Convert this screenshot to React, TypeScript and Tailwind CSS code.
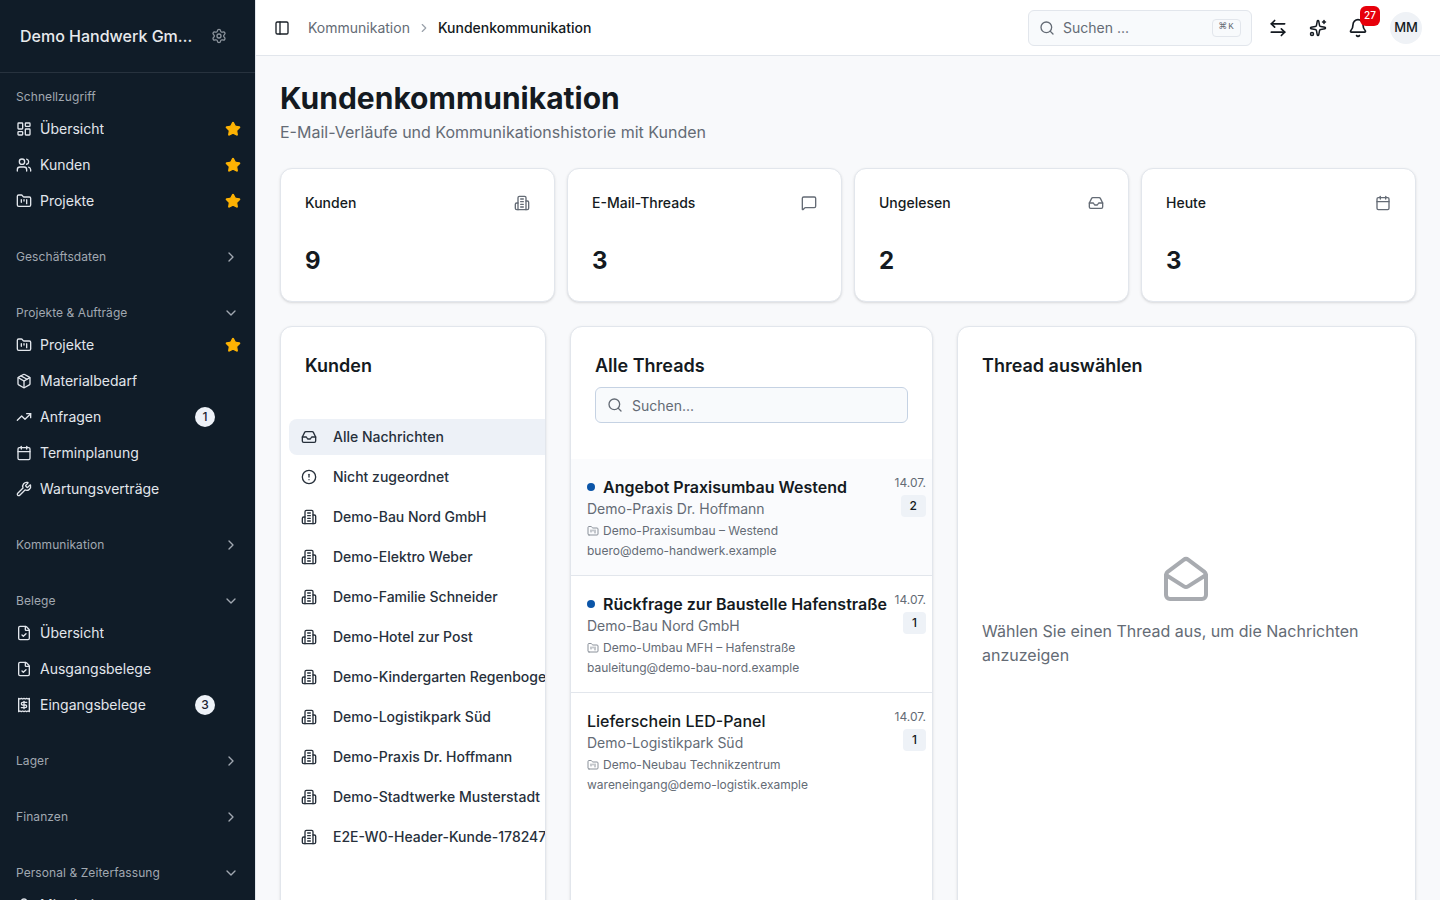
import React from "react";
import {
  LayoutDashboard, Users, FolderKanban, Package, TrendingUp, Calendar, Wrench, FileCheck, Receipt, User,
  Settings, Star, ChevronRight, ChevronDown, PanelLeft, Search, ArrowLeftRight, Sparkles, Bell,
  MessageSquare, Inbox, CircleAlert, MailOpen,
} from "lucide-react";

function Building({ className }: { className?: string }) {
  return (
    <svg className={className} viewBox="0 0 24 24" fill="none" stroke="currentColor" strokeWidth="2" strokeLinecap="round" strokeLinejoin="round">
      <path d="M6 22V4a2 2 0 0 1 2-2h8a2 2 0 0 1 2 2v18Z" />
      <path d="M6 12H4a2 2 0 0 0-2 2v6a2 2 0 0 0 2 2h2" />
      <path d="M18 9h2a2 2 0 0 1 2 2v9a2 2 0 0 1-2 2h-2" />
      <path d="M10 6h4" />
      <path d="M10 10h4" />
      <path d="M10 14h4" />
      <path d="M10 18h4" />
    </svg>
  );
}

type RowT = { icon: React.ComponentType<{ className?: string }>; label: string; star?: boolean; badge?: string };

function NavRow({ icon: Icon, label, star, badge }: RowT) {
  return (
    <div className="h-9 flex items-center pl-2 pr-1.5 relative text-sm text-[#e2e6ec]">
      <Icon className="w-4 h-4 shrink-0" />
      <span className="ml-2 truncate">{label}</span>
      {badge && (
        <span className="absolute left-[187px] top-2 w-5 h-5 rounded-full bg-[#eef2f8] text-[#1a2330] text-xs font-medium flex items-center justify-center">
          {badge}
        </span>
      )}
      {star && <Star className="w-4 h-4 ml-auto text-[#fdb203] fill-[#fdb203]" />}
    </div>
  );
}

function Section({ label, open, gap, rows }: { label: string; open?: boolean; gap: string; rows?: RowT[] }) {
  return (
    <div className={`px-2 ${gap}`}>
      <div className="h-[30px] flex items-center justify-between pl-2 pr-2 pt-0.5 text-xs tracking-[0.08px] text-[#a1a8b1]">
        <span>{label}</span>
        {open === undefined ? null : open ? <ChevronDown className="w-4 h-4" /> : <ChevronRight className="w-4 h-4" />}
      </div>
      {rows?.map((r, i) => <NavRow key={i} {...r} />)}
    </div>
  );
}

function Sidebar() {
  return (
    <aside className="w-64 shrink-0 h-screen overflow-hidden bg-[#101c28] border-r border-[#e2e6ec]">
      <div className="h-[73px] border-b border-[#27323e] flex items-center pl-5">
        <span className="w-[173px] truncate text-base font-medium text-[#e8eaed]">Demo Handwerk GmbH &amp; Co. KG</span>
        <Settings className="w-4 h-4 ml-[18px] text-[#8b939c]" />
      </div>
      <div className="pt-2">
        <Section label="Schnellzugriff" gap="mb-[22px]" rows={[
          { icon: LayoutDashboard, label: "Übersicht", star: true },
          { icon: Users, label: "Kunden", star: true },
          { icon: FolderKanban, label: "Projekte", star: true },
        ]} />
        <Section label="Geschäftsdaten" open={false} gap="mb-[26px]" />
        <Section label="Projekte & Aufträge" open gap="mb-[22px]" rows={[
          { icon: FolderKanban, label: "Projekte", star: true },
          { icon: Package, label: "Materialbedarf" },
          { icon: TrendingUp, label: "Anfragen", badge: "1" },
          { icon: Calendar, label: "Terminplanung" },
          { icon: Wrench, label: "Wartungsverträge" },
        ]} />
        <Section label="Kommunikation" open={false} gap="mb-[26px]" />
        <Section label="Belege" open gap="mb-[22px]" rows={[
          { icon: FileCheck, label: "Übersicht" },
          { icon: FileCheck, label: "Ausgangsbelege" },
          { icon: Receipt, label: "Eingangsbelege", badge: "3" },
        ]} />
        <Section label="Lager" open={false} gap="mb-[26px]" />
        <Section label="Finanzen" open={false} gap="mb-[26px]" />
        <Section label="Personal & Zeiterfassung" open gap="mb-0" rows={[
          { icon: User, label: "Mitarbeiter" },
        ]} />
      </div>
    </aside>
  );
}

function Header() {
  return (
    <header className="h-14 shrink-0 bg-white border-b border-[#e2e6ec] flex items-center pl-[18px] pr-[18px]">
      <PanelLeft className="w-4 h-4 text-[#1a2027]" />
      <span className="ml-[18px] text-sm text-[#646b75]">Kommunikation</span>
      <ChevronRight className="w-3.5 h-3.5 mx-[7px] text-[#9aa1aa]" />
      <span className="text-sm font-medium text-[#141a21]">Kundenkommunikation</span>
      <div className="ml-auto w-56 h-9 rounded-md border border-[#e2e6ec] bg-[#f8fafc] flex items-center pl-[10px] pr-[10px]">
        <Search className="w-4 h-4 text-[#646b75]" />
        <span className="ml-2 text-sm text-[#646b75]">Suchen ...</span>
        <span className="ml-auto h-[18px] w-[29px] rounded border border-[#e2e6ec] flex items-center justify-center text-[9px] tracking-[1px] text-[#646b75] font-['Liberation_Mono','DejaVu_Sans',monospace]">⌘K</span>
      </div>
      <div className="ml-[18px] w-[16px] flex justify-center"><ArrowLeftRight className="w-5 h-5 shrink-0 text-[#141a21]" /></div>
      <div className="ml-6 w-[16px] flex justify-center"><Sparkles className="w-[18px] h-[18px] shrink-0 text-[#141a21]" /></div>
      <div className="ml-6 w-[16px] flex justify-center relative">
        <Bell className="w-5 h-5 shrink-0 text-[#141a21]" />
        <span className="absolute left-[10px] top-[-12px] w-5 h-5 rounded-md bg-[#e7000b] text-white text-[10px] font-medium flex items-center justify-center">27</span>
      </div>
      <div className="ml-6 w-8 h-8 rounded-full bg-[#eff2f6] text-[#141a21] text-[13px] font-medium flex items-center justify-center">MM</div>
    </header>
  );
}

function Stat({ title, value, icon: Icon }: { title: string; value: string; icon: React.ComponentType<{ className?: string }> }) {
  return (
    <div className="h-[134px] rounded-xl border border-[#e2e6ec] bg-white shadow-sm p-6">
      <div className="h-5 flex items-center justify-between">
        <span className="text-sm font-medium text-[#141a21]">{title}</span>
        <Icon className="w-4 h-4 text-[#646b75]" />
      </div>
      <div className="mt-8 text-2xl font-bold text-[#141a21]">{value}</div>
    </div>
  );
}

const customers = [
  "Demo-Bau Nord GmbH", "Demo-Elektro Weber", "Demo-Familie Schneider", "Demo-Hotel zur Post",
  "Demo-Kindergarten Regenbogen", "Demo-Logistikpark Süd", "Demo-Praxis Dr. Hoffmann",
  "Demo-Stadtwerke Musterstadt", "E2E-W0-Header-Kunde-1782471",
];

function ListRow({ icon: Icon, label, active }: { icon: React.ComponentType<{ className?: string }>; label: string; active?: boolean }) {
  return (
    <div className={`h-9 flex items-center pl-3 rounded-l-lg whitespace-nowrap text-sm font-medium text-[#27303b] ${active ? "bg-[#edf1f7]" : ""}`}>
      <Icon className="w-4 h-4 shrink-0 text-[#27303b]" />
      <span className="ml-4">{label}</span>
    </div>
  );
}

function Thread({ title, client, project, email, count, unread, selected, last }: {
  title: string; client: string; project: string; email: string; count: string; unread?: boolean; selected?: boolean; last?: boolean;
}) {
  return (
    <div className={`h-[117px] relative pl-4 pr-1.5 pt-[16px] ${selected ? "bg-[#fafbfd]" : "bg-white"} ${last ? "" : "border-b border-[#e2e6ec]"}`}>
      <div className="flex justify-between">
        <div>
          <div className="flex items-center h-6 whitespace-nowrap">
            {unread && <span className="w-2 h-2 rounded-full bg-[#0b55a8] mr-2" />}
            <span className={`text-base text-[#141a21] ${unread ? "font-semibold" : "font-medium"}`}>{title}</span>
          </div>
          <div className="text-sm leading-5 text-[#646b75]">{client}</div>
          <div className="mt-1 h-4 flex items-center text-xs text-[#646b75]">
            <FolderKanban className="w-3 h-3 mr-1 text-[#8a919a]" />
            {project}
          </div>
          <div className="mt-1 text-xs leading-4 text-[#646b75]">{email}</div>
        </div>
        <div className="flex flex-col items-end shrink-0">
          <span className="text-xs leading-4 text-[#646b75]">14.07.</span>
          <span className="mt-[4px] h-[22px] px-[9px] rounded bg-[#eef2f7] text-xs font-medium text-[#141a21] flex items-center">{count}</span>
        </div>
      </div>
    </div>
  );
}

export default function App() {
  return (
    <div className="flex h-screen overflow-hidden bg-[#f8f9fb] font-['Inter',sans-serif]">
      <Sidebar />
      <div className="flex-1 min-w-0 flex flex-col h-screen overflow-hidden">
        <Header />
        <main className="flex-1 overflow-hidden p-6">
          <h1 className="text-[30px] leading-9 font-bold text-[#141a21]">Kundenkommunikation</h1>
          <p className="mt-1 text-base text-[#646b75]">E-Mail-Verläufe und Kommunikationshistorie mit Kunden</p>
          <div className="mt-6 grid grid-cols-4 gap-3">
            <Stat title="Kunden" value="9" icon={Building} />
            <Stat title="E-Mail-Threads" value="3" icon={MessageSquare} />
            <Stat title="Ungelesen" value="2" icon={Inbox} />
            <Stat title="Heute" value="3" icon={Calendar} />
          </div>
          <div className="mt-6 grid grid-cols-[266px_363px_1fr] gap-6 h-[640px]">
            <section className="rounded-xl border border-[#e2e6ec] bg-white shadow-sm overflow-hidden">
              <h2 className="pl-6 pt-[25px] text-lg leading-7 font-semibold text-[#141a21]">Kunden</h2>
              <div className="mt-[39px] pl-2 flex flex-col gap-1">
                <ListRow icon={Inbox} label="Alle Nachrichten" active />
                <ListRow icon={CircleAlert} label="Nicht zugeordnet" />
                {customers.map((c) => <ListRow key={c} icon={Building} label={c} />)}
              </div>
            </section>
            <section className="rounded-xl border border-[#e2e6ec] bg-white shadow-sm overflow-hidden">
              <h2 className="pl-6 pt-[25px] text-lg leading-7 font-semibold text-[#141a21]">Alle Threads</h2>
              <div className="mx-6 mt-[7px] h-9 rounded-md border border-[#c5d2e3] bg-[#f8fafc] flex items-center pl-[11px]">
                <Search className="w-4 h-4 text-[#646b75]" />
                <span className="ml-[9px] pt-px text-sm text-[#646b75]">Suchen...</span>
              </div>
              <div className="mt-9">
                <Thread selected unread title="Angebot Praxisumbau Westend" client="Demo-Praxis Dr. Hoffmann" project="Demo-Praxisumbau – Westend" email="buero@demo-handwerk.example" count="2" />
                <Thread unread title="Rückfrage zur Baustelle Hafenstraße" client="Demo-Bau Nord GmbH" project="Demo-Umbau MFH – Hafenstraße" email="bauleitung@demo-bau-nord.example" count="1" />
                <Thread last title="Lieferschein LED-Panel" client="Demo-Logistikpark Süd" project="Demo-Neubau Technikzentrum" email="wareneingang@demo-logistik.example" count="1" />
              </div>
            </section>
            <section className="rounded-xl border border-[#e2e6ec] bg-white shadow-sm overflow-hidden px-6 pt-[25px]">
              <h2 className="text-lg leading-7 font-semibold text-[#141a21]">Thread auswählen</h2>
              <div className="mt-[175px] flex flex-col items-center">
                <MailOpen className="w-12 h-12 text-[#a8abb0] -translate-x-px" />
                <p className="mt-4 text-base text-[#646b75]">Wählen Sie einen Thread aus, um die Nachrichten anzuzeigen</p>
              </div>
            </section>
          </div>
        </main>
      </div>
    </div>
  );
}
